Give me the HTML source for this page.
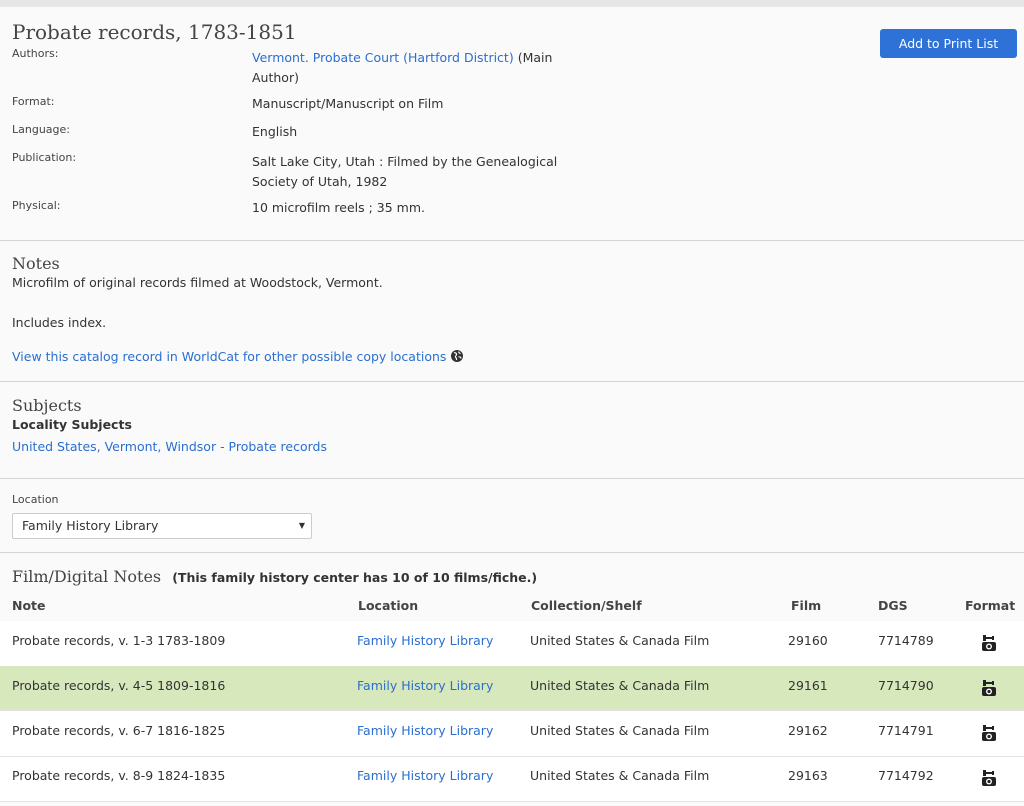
<!DOCTYPE html><html><head><style>
body{margin:0;width:1024px;height:806px;background:#fafafa;font-family:"DejaVu Sans",Verdana,sans-serif;font-size:12.5px;color:#333;position:relative;overflow:hidden}
.a{position:absolute;white-space:nowrap}
a,.l{color:#2a6fd0;text-decoration:none}
.hr{position:absolute;left:0;width:1024px;height:1px;background:#d4d4d4}
.h{font-family:"DejaVu Serif",serif;color:#444}
.lab{font-size:11px;color:#444}
.th{font-weight:bold;color:#444;font-size:12.5px}
</style></head><body>
<div class="a" style="left:0;top:0;width:1024px;height:7px;background:#e6e6e6"></div>
<div class="a h" style="left:12px;top:20px;font-size:20px">Probate records, 1783-1851</div>
<div class="a" style="left:880px;top:29px;width:137px;height:29px;background:#2e72d8;border-radius:3px;color:#fff;text-align:center;line-height:29px;font-size:12.5px">Add to Print List</div>
<div class="a lab" style="left:12px;top:47px">Authors:</div>
<div class="a" style="left:252px;top:48px;line-height:20px"><span class="l">Vermont. Probate Court (Hartford District)</span> (Main<br>Author)</div>
<div class="a lab" style="left:12px;top:95px">Format:</div>
<div class="a" style="left:252px;top:96px">Manuscript/Manuscript on Film</div>
<div class="a lab" style="left:12px;top:123px">Language:</div>
<div class="a" style="left:252px;top:124px">English</div>
<div class="a lab" style="left:12px;top:151px">Publication:</div>
<div class="a" style="left:252px;top:152px;line-height:20px">Salt Lake City, Utah : Filmed by the Genealogical<br>Society of Utah, 1982</div>
<div class="a lab" style="left:12px;top:199px">Physical:</div>
<div class="a" style="left:252px;top:200px">10 microfilm reels ; 35 mm.</div>
<div class="hr" style="top:240px"></div>
<div class="a h" style="left:12px;top:254px;font-size:16px">Notes</div>
<div class="a" style="left:12px;top:275px">Microfilm of original records filmed at Woodstock, Vermont.</div>
<div class="a" style="left:12px;top:315px">Includes index.</div>
<div class="a" style="left:12px;top:349px"><span class="l">View this catalog record in WorldCat for other possible copy locations</span> <svg width="14" height="14" viewBox="0 0 14 14" style="vertical-align:-2px"><circle cx="7" cy="7" r="6" fill="#333"/><path d="M4 3.5c1 .5 2 0 2.5 1.5s-1.5 1.5-1 3 1.5 1 1 3M9 2.5c-.5 1 .5 2 1.5 2M8.5 8c1-.5 2.5 0 2.5 1.5" stroke="#fff" fill="none" stroke-width="1.2"/></svg></div>
<div class="hr" style="top:381px"></div>
<div class="a h" style="left:12px;top:396px;font-size:16px">Subjects</div>
<div class="a" style="left:12px;top:417px;font-weight:bold">Locality Subjects</div>
<div class="a l" style="left:12px;top:439px">United States, Vermont, Windsor - Probate records</div>
<div class="hr" style="top:478px"></div>
<div class="a lab" style="left:12px;top:493px">Location</div>
<div class="a" style="left:12px;top:513px;width:298px;height:24px;border:1px solid #ccc;background:#fff;border-radius:2px;line-height:24px;text-indent:9px">Family History Library<span style="position:absolute;right:6px;font-size:8px">▼</span></div>
<div class="hr" style="top:552px"></div>
<div class="a h" style="left:12px;top:567px;font-size:16px">Film/Digital Notes <span style="font-family:'DejaVu Sans',sans-serif;font-size:12.5px;font-weight:bold;color:#333;margin-left:6px">(This family history center has 10 of 10 films/fiche.)</span></div>
<div class="a th" style="left:12px;top:598px">Note</div>
<div class="a th" style="left:358px;top:598px">Location</div>
<div class="a th" style="left:531px;top:598px">Collection/Shelf</div>
<div class="a th" style="left:791px;top:598px">Film</div>
<div class="a th" style="left:878px;top:598px">DGS</div>
<div class="a th" style="left:965px;top:598px">Format</div>
<div class="a" style="left:0;top:621px;width:1024px;height:45px;background:#fff"></div>
<div class="a" style="left:0;top:666px;width:1024px;height:44px;background:#d7e8bd"></div>
<div class="a" style="left:0;top:711px;width:1024px;height:45px;background:#fff"></div>
<div class="a" style="left:0;top:757px;width:1024px;height:44px;background:#fff"></div>
<div class="hr" style="top:710px;background:#e2e2e2"></div>
<div class="hr" style="top:756px;background:#e2e2e2"></div>
<div class="hr" style="top:801px;background:#e2e2e2"></div>
<div id="rows"></div>
<script>
var r=[["1-3 1783-1809","29160","7714789"],["4-5 1809-1816","29161","7714790"],["6-7 1816-1825","29162","7714791"],["8-9 1824-1835","29163","7714792"]];
var h="";r.forEach(function(x,i){var y=633+i*45;
h+='<div class="a" style="left:12px;top:'+y+'px">Probate records, v. '+x[0]+'</div><div class="a l" style="left:357px;top:'+y+'px">Family History Library</div><div class="a" style="left:530px;top:'+y+'px">United States &amp; Canada Film</div><div class="a" style="left:788px;top:'+y+'px">'+x[1]+'</div><div class="a" style="left:878px;top:'+y+'px">'+x[2]+'</div>'+
'<svg class="a" style="left:981px;top:'+(y+1)+'px" width="16" height="18" viewBox="0 0 16 18"><rect x="2" y="1" width="3" height="6" fill="#222"/><rect x="2" y="3" width="11" height="2" fill="#222"/><rect x="11" y="2" width="2" height="4" fill="#222"/><rect x="1" y="8" width="14" height="9" rx="2" fill="#222"/><circle cx="8" cy="12.5" r="3" fill="#fff"/><circle cx="8" cy="12.5" r="1.6" fill="#222"/></svg>';});
document.getElementById("rows").innerHTML=h;
</script>
</body></html>
